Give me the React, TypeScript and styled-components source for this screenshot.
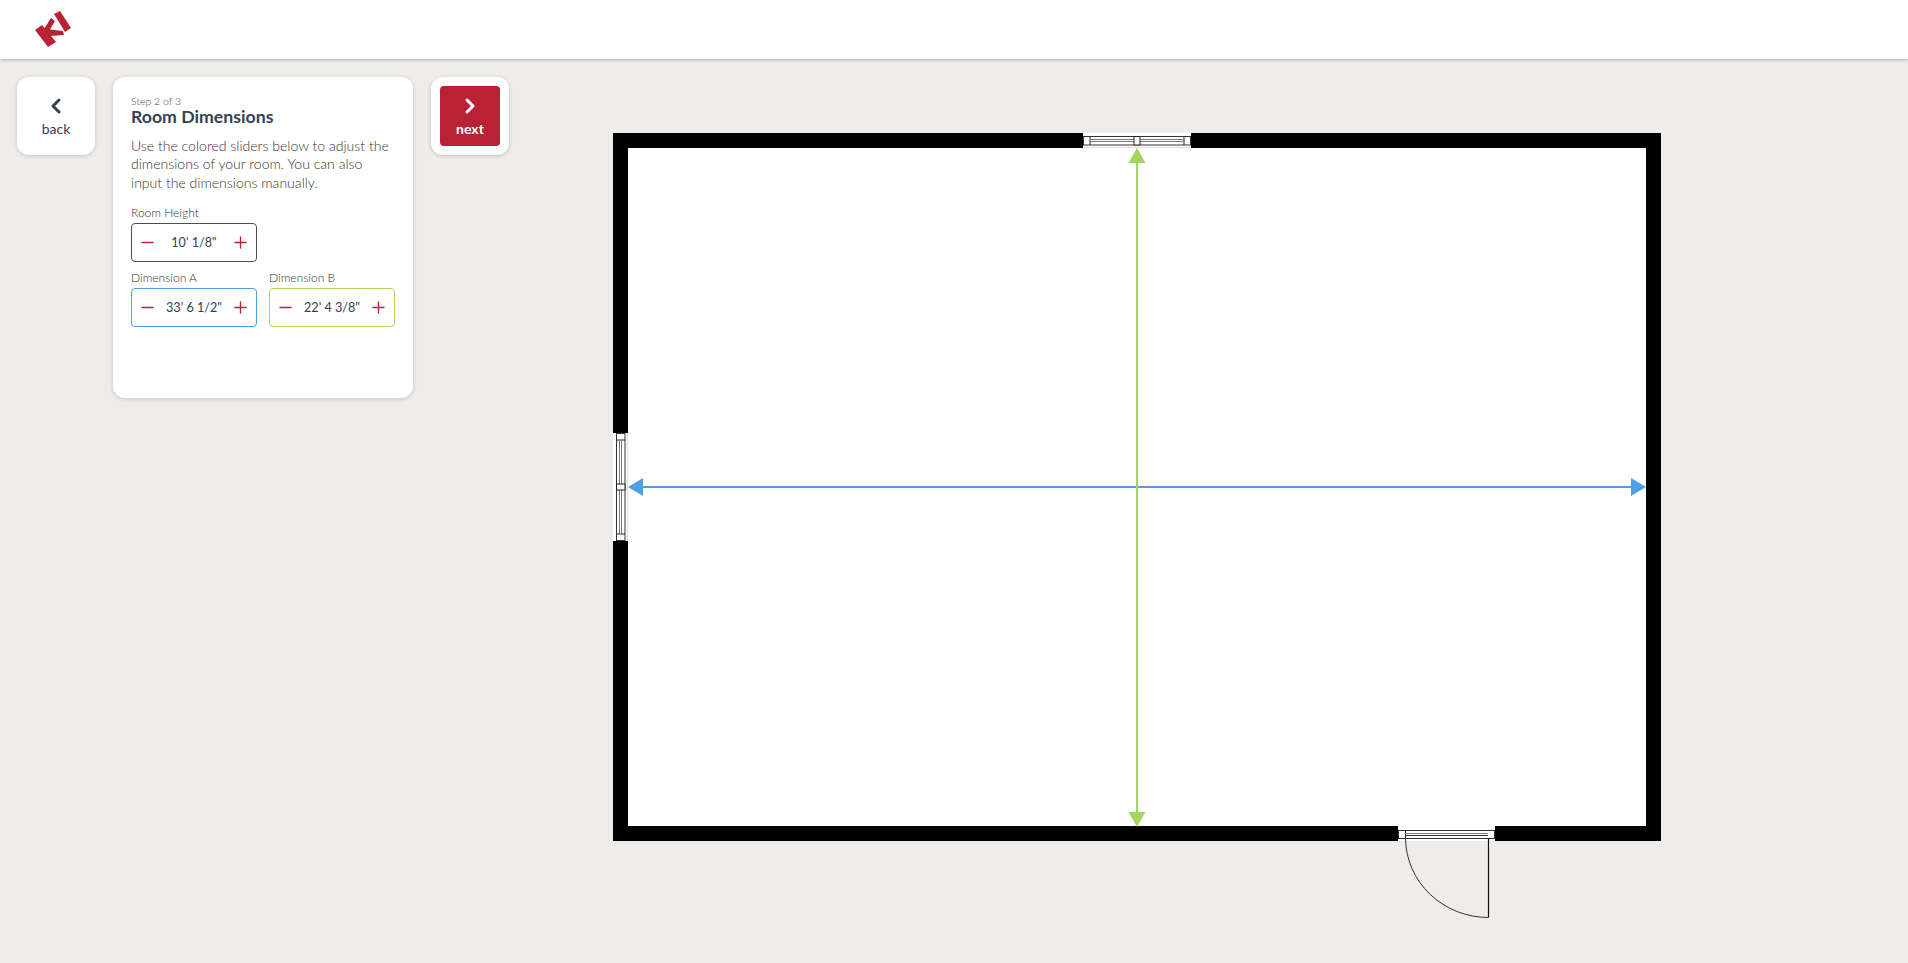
import React from 'react'
import styled, { createGlobalStyle } from 'styled-components'
import { ChevronLeft, ChevronRight, Minus, Plus } from 'lucide-react'

const RED = '#b92234'
const INK = '#34424f'
const BLUE = '#4c9fe6'
const GREEN = '#a4d65e'

type FieldProps = {
  label: string
  value: string
  color: string
}

const DimensionField: React.FC<FieldProps> = ({ label, value, color }) => (
  <Field>
    <FieldLabel>{label}</FieldLabel>
    <Stepper $color={color}>
      <StepButton>
        <Minus size={19} strokeWidth={1.7} />
      </StepButton>
      <StepValue>{value}</StepValue>
      <StepButton>
        <Plus size={19} strokeWidth={1.7} />
      </StepButton>
    </Stepper>
  </Field>
)

const Opening: React.FC<{ transform: string }> = ({ transform }) => (
  <g transform={transform}>
    <rect x={-54} y={0} width={108} height={15} fill="#fff" />
    <line x1={-54} y1={14.5} x2={54} y2={14.5} stroke="#ddd" />
    <rect x={-53.5} y={3.5} width={107} height={8.5} fill="none" stroke="#333" />
    <line x1={-47} y1={3.5} x2={-47} y2={12} stroke="#222" />
    <line x1={47} y1={3.5} x2={47} y2={12} stroke="#222" />
    <line x1={-47} y1={6.5} x2={47} y2={6.5} stroke="#777" />
    <line x1={-47} y1={8.5} x2={47} y2={8.5} stroke="#777" />
    <rect x={-3} y={3.5} width={6} height={8.5} fill="#fff" stroke="#222" />
  </g>
)

const FloorPlan = () => (
  <PlanSvg viewBox="613 133 1048 786" width={1048} height={786}>
    <rect x={613} y={133} width={1048} height={708} fill="#000" />
    <rect x={628} y={148} width={1018} height={678} fill="#fff" />
    <Opening transform="translate(1137 133)" />
    <Opening transform="translate(613 487) rotate(-90)" />
    <g>
      <rect x={1398} y={826} width={97} height={15} fill="#fff" />
      <rect x={1398.5} y={830.5} width={96} height={8} fill="none" stroke="#333" />
      <line x1={1405.5} y1={830} x2={1405.5} y2={839} stroke="#222" />
      <line x1={1405} y1={833.5} x2={1488} y2={833.5} stroke="#777" />
      <line x1={1405} y1={835.5} x2={1488} y2={835.5} stroke="#333" />
      <path d="M1488.5 838V917.5" fill="none" stroke="#111" strokeWidth={1.2} />
      <path d="M1405.5 838A83 80 0 0 0 1488.5 917.5" fill="none" stroke="#333" />
    </g>
    <line x1={642} y1={487} x2={1633} y2={487} stroke={BLUE} strokeWidth={2} />
    <polygon points="628,487 643,478 643,496" fill={BLUE} />
    <polygon points="1646,487 1631,478 1631,496" fill={BLUE} />
    <line x1={1137} y1={162} x2={1137} y2={812} stroke={GREEN} strokeWidth={2} />
    <polygon points="1137,148 1128.5,163 1145.5,163" fill={GREEN} />
    <polygon points="1137,827 1128.5,812 1145.5,812" fill={GREEN} />
  </PlanSvg>
)

const App = () => (
  <>
    <GlobalStyle />
    <Header>
      <LogoMark viewBox="32 8 44 44" width={44} height={44}>
        <g fill={RED}>
          <polygon points="35,30 42,25 56,42 48,47" />
          <polygon points="44,29 51,18 55,21 50,29.5 63,31 64,35 49,36" />
          <polygon points="54,14 60,11 71,28 65,32" />
        </g>
      </LogoMark>
    </Header>
    <Main>
      <NavCard>
        <BackButton>
          <ChevronLeft size={24} strokeWidth={3} />
          back
        </BackButton>
      </NavCard>
      <Panel>
        <StepText>Step 2 of 3</StepText>
        <Title>Room Dimensions</Title>
        <Description>
          Use the colored sliders below to adjust the dimensions of your room. You can also input the
          dimensions manually.
        </Description>
        <FieldGrid>
          <DimensionField label="Room Height" value={`10' 1/8"`} color="#4d4d4d" />
          <span />
          <DimensionField label="Dimension A" value={`33' 6 1/2"`} color={BLUE} />
          <DimensionField label="Dimension B" value={`22' 4 3/8"`} color={GREEN} />
        </FieldGrid>
      </Panel>
      <NavCard>
        <NextButton>
          <ChevronRight size={24} strokeWidth={3} />
          next
        </NextButton>
      </NavCard>
      <FloorPlan />
    </Main>
  </>
)

export default App

const GlobalStyle = createGlobalStyle`
  html, body {
    margin: 0;
    height: 100%;
    overflow: hidden;
    background: #eeede9;
    font-family: 'Lato', 'Liberation Sans', sans-serif;
  }
`

const Header = styled.header`
  display: flex;
  align-items: flex-start;
  height: 59px;
  padding: 8px 0 0 32px;
  box-sizing: border-box;
  background: #fff;
  box-shadow: 0 1px 3px rgba(0, 0, 0, 0.25);
`

const LogoMark = styled.svg`
  display: block;
`

const Main = styled.main`
  display: flex;
  align-items: flex-start;
  padding: 18px 0 0 17px;
`

const NavCard = styled.div`
  width: 78px;
  height: 78px;
  box-sizing: border-box;
  padding: 9px;
  background: #fff;
  border-radius: 12px;
  box-shadow: 0 1px 4px rgba(0, 0, 0, 0.18);
  flex: none;
`

const BackButton = styled.button`
  display: flex;
  flex-direction: column;
  align-items: center;
  justify-content: center;
  gap: 2px;
  width: 100%;
  height: 100%;
  padding: 0 0 2px;
  border: 0;
  border-radius: 4px;
  background: transparent;
  color: ${INK};
  font: 400 14px 'Lato', sans-serif;
`

const NextButton = styled(BackButton)`
  background: ${RED};
  color: #fff;
  font-weight: 700;
`

const Panel = styled.section`
  width: 300px;
  height: 321px;
  box-sizing: border-box;
  margin: 0 18px;
  padding: 18px 18px 0;
  background: #fff;
  border-radius: 12px;
  box-shadow: 0 1px 4px rgba(0, 0, 0, 0.18);
  flex: none;
`

const StepText = styled.div`
  font-size: 10.5px;
  font-weight: 300;
  line-height: 12px;
  color: #444;
`

const Title = styled.h1`
  margin: 0;
  font-size: 17.7px;
  font-weight: 700;
  line-height: 19px;
  color: ${INK};
`

const Description = styled.p`
  max-width: 260px;
  margin: 11px 0 0;
  font-size: 14.05px;
  font-weight: 300;
  line-height: 18.3px;
  color: #333;
`

const FieldGrid = styled.div`
  display: grid;
  grid-template-columns: 126px 126px;
  column-gap: 12px;
  row-gap: 8px;
  margin-top: 13px;
`

const Field = styled.div`
  display: flex;
  flex-direction: column;
  gap: 2px;
`

const FieldLabel = styled.label`
  font-size: 12px;
  font-weight: 300;
  line-height: 16px;
  color: #333;
`

const Stepper = styled.div<{ $color: string }>`
  display: flex;
  align-items: center;
  justify-content: space-between;
  height: 39px;
  box-sizing: border-box;
  padding: 0 6px;
  border: 1px solid ${(p) => p.$color};
  border-radius: 4px;
`

const StepButton = styled.span`
  display: flex;
  color: ${RED};
`

const StepValue = styled.span`
  font-size: 12.6px;
  color: ${INK};
`

const PlanSvg = styled.svg`
  display: block;
  flex: none;
  margin: 56px 0 0 104px;
`
